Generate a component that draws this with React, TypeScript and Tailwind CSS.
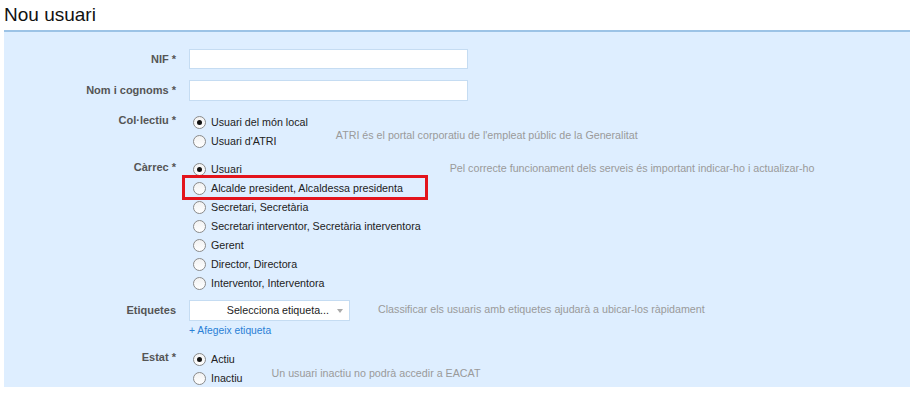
import React, { useState } from 'react';

const CARRECS = [
  'Usuari',
  'Alcalde president, Alcaldessa presidenta',
  'Secretari, Secretària',
  'Secretari interventor, Secretària interventora',
  'Gerent',
  'Director, Directora',
  'Interventor, Interventora',
];

function Radio({ checked }: { checked: boolean }) {
  return (
    <span className="w-[13px] h-[13px] rounded-full border border-[#8a8a8a] bg-gradient-to-b from-[#f2f2f2] to-white flex items-center justify-center shrink-0">
      {checked && <span className="w-[5px] h-[5px] rounded-full bg-[#111]" />}
    </span>
  );
}

function Option({ label, checked, onClick }: { label: string; checked: boolean; onClick: () => void }) {
  return (
    <div className="h-[19px] flex items-center gap-[5px] cursor-pointer" onClick={onClick}>
      <Radio checked={checked} />
      <span className="text-[10.7px] text-[#222]">{label}</span>
    </div>
  );
}

export default function App() {
  const [collectiu, setCollectiu] = useState(0);
  const [carrec, setCarrec] = useState(0);
  const [estat, setEstat] = useState(0);

  return (
    <div className="w-[918px] h-[397px] bg-white font-['Liberation_Sans',Arial,sans-serif] overflow-hidden">
      <h1 className="text-[19px] leading-[28px] text-[#111] pl-[4px] pt-[1px] h-[30px]">Nou usuari</h1>

      <div className="ml-[4px] w-[906px] h-[357px] bg-[#deeeff] border-t-2 border-[#9cc3e6] pt-[17px]">
        {/* NIF */}
        <div className="flex items-center h-[20px]">
          <label className="w-[172px] text-right text-[11px] font-bold text-[#555]">NIF *</label>
          <input className="ml-[13px] w-[279px] h-[20px] bg-white border border-[#c5dcf2] outline-none px-1 text-[11px]" />
        </div>

        {/* Nom */}
        <div className="flex items-center h-[21px] mt-[11px]">
          <label className="w-[172px] text-right text-[11px] font-bold text-[#555]">Nom i cognoms *</label>
          <input className="ml-[13px] w-[279px] h-[21px] bg-white border border-[#c5dcf2] outline-none px-1 text-[11px]" />
        </div>

        {/* Col·lectiu */}
        <div className="flex mt-[12px]">
          <label className="w-[172px] text-right text-[11px] font-bold text-[#555] leading-[15px]">Col·lectiu *</label>
          <div className="ml-[17px] flex flex-col">
            <Option label="Usuari del món local" checked={collectiu === 0} onClick={() => setCollectiu(0)} />
            <Option label="Usuari d'ATRI" checked={collectiu === 1} onClick={() => setCollectiu(1)} />
          </div>
          <p className="ml-[28px] mt-[14px] text-[10.7px] text-[#9a9a9a]">ATRI és el portal corporatiu de l'empleat públic de la Generalitat</p>
        </div>

        {/* Càrrec */}
        <div className="flex mt-[9px]">
          <label className="w-[172px] text-right text-[11px] font-bold text-[#555] leading-[15px]">Càrrec *</label>
          <div className="ml-[17px] flex flex-col">
            {CARRECS.map((c, i) =>
              i === 1 ? (
                <div key={c} className="relative">
                  <Option label={c} checked={carrec === i} onClick={() => setCarrec(i)} />
                  <span className="absolute left-[-11px] top-[-4px] w-[246px] h-[25px] border-[3px] border-[#e3141c] pointer-events-none" />
                </div>
              ) : (
                <Option key={c} label={c} checked={carrec === i} onClick={() => setCarrec(i)} />
              )
            )}
          </div>
          <p className="ml-[29px] mt-[0px] text-[10.7px] text-[#9a9a9a]">Pel correcte funcionament dels serveis és important indicar-ho i actualizar-ho</p>
        </div>

        {/* Etiquetes */}
        <div className="flex mt-[7px]">
          <label className="w-[172px] text-right text-[11px] font-bold text-[#555] leading-[21px]">Etiquetes</label>
          <div className="ml-[13px] flex flex-col">
            <div className="w-[161px] h-[21px] bg-white border border-[#c5dcf2] flex items-center justify-end pr-[6px] gap-[8px]">
              <span className="text-[10.7px] text-[#222]">Selecciona etiqueta...</span>
              <span className="w-0 h-0 border-l-[3px] border-r-[3px] border-t-[4px] border-l-transparent border-r-transparent border-t-[#aaa]" />
            </div>
            <span className="text-[10.3px] text-[#2a7fd6] mt-[2px] leading-[16px]">+ Afegeix etiqueta</span>
          </div>
          <p className="ml-[28px] text-[10.7px] text-[#9a9a9a] leading-[19px]">Classificar els usuaris amb etiquetes ajudarà a ubicar-los ràpidament</p>
        </div>

        {/* Estat */}
        <div className="flex mt-[11px]">
          <label className="w-[172px] text-right text-[11px] font-bold text-[#555] leading-[15px]">Estat *</label>
          <div className="ml-[17px] flex flex-col">
            <Option label="Actiu" checked={estat === 0} onClick={() => setEstat(0)} />
            <Option label="Inactiu" checked={estat === 1} onClick={() => setEstat(1)} />
          </div>
          <p className="ml-[29px] mt-[15px] text-[10.7px] text-[#9a9a9a]">Un usuari inactiu no podrà accedir a EACAT</p>
        </div>
      </div>
    </div>
  );
}
